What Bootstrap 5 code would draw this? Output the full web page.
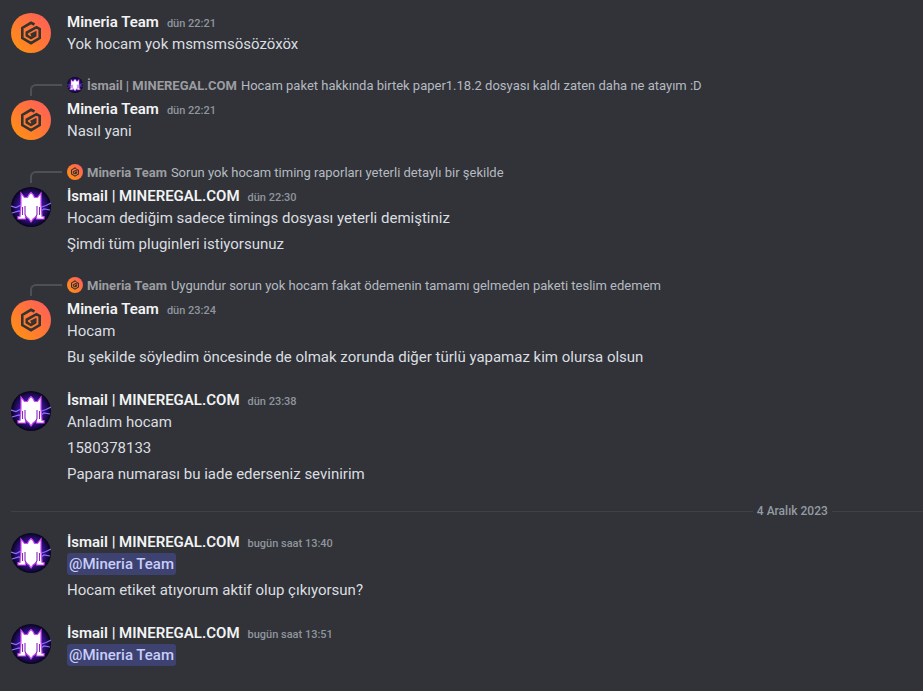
<!DOCTYPE html>
<html lang="tr">
<head>
<meta charset="utf-8">
<meta name="viewport" content="width=device-width, initial-scale=1">
<title>Sohbet</title>
<link href="https://cdn.jsdelivr.net/npm/bootstrap@5.3.0/dist/css/bootstrap.min.css" rel="stylesheet">
<style>
  body { background: #313338; color: #dbdee1; font: 15px/22px Roboto, "Noto Sans", sans-serif; }
  .chat { padding: 11px 0 24px 11px; }
  .entry { margin-bottom: 21px; }
  .avatar { width: 40px; height: 40px; margin: 2px 16px 0 0; }
  .avatar-mini { width: 16px; height: 16px; }
  .heading { height: 22px; }
  .author { font-weight: 600; color: #f2f3f5; }
  .stamp { font-size: 11px; font-weight: 500; color: #8f959e; }
  .line + .line { margin-top: 4px; }
  .reply { height: 18px; margin-bottom: 4px; font-size: 13px; line-height: 19px; column-gap: 4px; color: #b5bac1; }
  .reply-author { font-weight: 700; color: #9c9da1; }
  .spine { width: 32px; height: 12px; margin: 8px 0 0 19px; border: solid #4e5058; border-width: 2px 0 0 2px; border-top-left-radius: 6px; }
  .reply .avatar-mini { margin-left: 1px; }
  .mention { padding: 2px; border-radius: 3px; background: #3d4270; color: #c9cdfb; font-weight: 500; text-decoration: none; }
  .day { column-gap: 4px; margin: -6px 0 9px; font-size: 12px; font-weight: 500; color: #949ba4; }
  .rule { border-top: 1px solid #3f4147; }
  .rule-end { width: 10%; }
</style>
</head>
<body>
<svg class="d-block" width="0" height="0" aria-hidden="true">
  <defs>
    <linearGradient id="fire" x1="0" y1="0.9" x2="0.9" y2="0"><stop offset="0" stop-color="#ff9210"/><stop offset="1" stop-color="#ff5c5c"/></linearGradient>
    <radialGradient id="night"><stop offset="0" stop-color="#7a28d8"/><stop offset="0.65" stop-color="#32108a"/><stop offset="1" stop-color="#07041a"/></radialGradient>
    <symbol id="mineria" viewBox="0 0 40 40">
      <circle cx="20" cy="20" r="20" fill="url(#fire)"/>
      <path d="M23.500 11.500 20 9.800 11.300 14.900V25.100L20 30.200 28.700 25.100V16L25.500 14.200 15.800 19.500V22.500L20 25 24.200 22.500V19.800L19.800 22" fill="none" stroke="#36332f" stroke-width="2.600"/>
    </symbol>
    <symbol id="regal" viewBox="0 0 40 40">
      <circle cx="20" cy="20" r="20" fill="url(#night)"/>
      <path d="M0 19 5 20.500 12 17M1 26 8 24 13 26M40 16 35 18.500 28 21M39 23 33 22 27 26" fill="none" stroke="#8f70ff" stroke-width="1.200"/>
      <path d="M10 6 13.500 10.500 16.500 10.500 18 7.500 20 5.500 22 7.500 23.500 10.500 26.500 10.500 30 6V18L31 29.500H33V32H25.500V30L24.500 30 22 32 20 35 18 32 15.500 30 14.500 30V32H7V29.500H9L10 18Z" fill="#fff" stroke="#d04cf5" stroke-width="1.200"/>
      <path d="M14 19V27.500L15.500 30.500M26 19V27.500L24.500 30.500M11.500 20V28M28.500 20V28" fill="none" stroke="#8228c0" stroke-width="1.100"/>
    </symbol>
  </defs>
</svg>
<main class="chat">
  <article class="entry d-flex">
    <svg class="avatar flex-shrink-0" aria-hidden="true"><use href="#mineria"/></svg>
    <div>
      <div class="heading d-flex align-items-baseline gap-2"><span class="author">Mineria Team</span><time class="stamp">dün 22:21</time></div>
      <div class="line">Yok hocam yok msmsmsösözöxöx</div>
    </div>
  </article>

  <article class="entry">
    <div class="reply d-flex">
      <div class="spine flex-shrink-0"></div>
      <svg class="avatar-mini flex-shrink-0 align-self-center" aria-hidden="true"><use href="#regal"/></svg>
      <span class="reply-author text-nowrap">İsmail | MINEREGAL.COM</span>
      <span class="text-truncate">Hocam paket hakkında birtek paper1.18.2 dosyası kaldı zaten daha ne atayım :D</span>
    </div>
    <div class="d-flex">
      <svg class="avatar flex-shrink-0" aria-hidden="true"><use href="#mineria"/></svg>
      <div>
        <div class="heading d-flex align-items-baseline gap-2"><span class="author">Mineria Team</span><time class="stamp">dün 22:21</time></div>
        <div class="line">Nasıl yani</div>
      </div>
    </div>
  </article>

  <article class="entry">
    <div class="reply d-flex">
      <div class="spine flex-shrink-0"></div>
      <svg class="avatar-mini flex-shrink-0 align-self-center" aria-hidden="true"><use href="#mineria"/></svg>
      <span class="reply-author text-nowrap">Mineria Team</span>
      <span class="text-truncate">Sorun yok hocam timing raporları yeterli detaylı bir şekilde</span>
    </div>
    <div class="d-flex">
      <svg class="avatar flex-shrink-0" aria-hidden="true"><use href="#regal"/></svg>
      <div>
        <div class="heading d-flex align-items-baseline gap-2"><span class="author">İsmail | MINEREGAL.COM</span><time class="stamp">dün 22:30</time></div>
        <div class="line">Hocam dediğim sadece timings dosyası yeterli demiştiniz</div>
        <div class="line">Şimdi tüm pluginleri istiyorsunuz</div>
      </div>
    </div>
  </article>

  <article class="entry">
    <div class="reply d-flex">
      <div class="spine flex-shrink-0"></div>
      <svg class="avatar-mini flex-shrink-0 align-self-center" aria-hidden="true"><use href="#mineria"/></svg>
      <span class="reply-author text-nowrap">Mineria Team</span>
      <span class="text-truncate">Uygundur sorun yok hocam fakat ödemenin tamamı gelmeden paketi teslim edemem</span>
    </div>
    <div class="d-flex">
      <svg class="avatar flex-shrink-0" aria-hidden="true"><use href="#mineria"/></svg>
      <div>
        <div class="heading d-flex align-items-baseline gap-2"><span class="author">Mineria Team</span><time class="stamp">dün 23:24</time></div>
        <div class="line">Hocam</div>
        <div class="line">Bu şekilde söyledim öncesinde de olmak zorunda diğer türlü yapamaz kim olursa olsun</div>
      </div>
    </div>
  </article>

  <article class="entry d-flex">
    <svg class="avatar flex-shrink-0" aria-hidden="true"><use href="#regal"/></svg>
    <div>
      <div class="heading d-flex align-items-baseline gap-2"><span class="author">İsmail | MINEREGAL.COM</span><time class="stamp">dün 23:38</time></div>
      <div class="line">Anladım hocam</div>
      <div class="line">1580378133</div>
      <div class="line">Papara numarası bu iade ederseniz sevinirim</div>
    </div>
  </article>

  <div class="day d-flex align-items-center">
    <div class="rule flex-grow-1"></div>
    <time datetime="2023-12-04">4 Aralık 2023</time>
    <div class="rule rule-end"></div>
  </div>

  <article class="entry d-flex">
    <svg class="avatar flex-shrink-0" aria-hidden="true"><use href="#regal"/></svg>
    <div>
      <div class="heading d-flex align-items-baseline gap-2"><span class="author">İsmail | MINEREGAL.COM</span><time class="stamp">bugün saat 13:40</time></div>
      <div class="line"><a class="mention" href="#">@Mineria Team</a></div>
      <div class="line">Hocam etiket atıyorum aktif olup çıkıyorsun?</div>
    </div>
  </article>

  <article class="d-flex">
    <svg class="avatar flex-shrink-0" aria-hidden="true"><use href="#regal"/></svg>
    <div>
      <div class="heading d-flex align-items-baseline gap-2"><span class="author">İsmail | MINEREGAL.COM</span><time class="stamp">bugün saat 13:51</time></div>
      <div class="line"><a class="mention" href="#">@Mineria Team</a></div>
    </div>
  </article>
</main>
<script src="https://cdn.jsdelivr.net/npm/bootstrap@5.3.0/dist/js/bootstrap.bundle.min.js"></script>
</body>
</html>
